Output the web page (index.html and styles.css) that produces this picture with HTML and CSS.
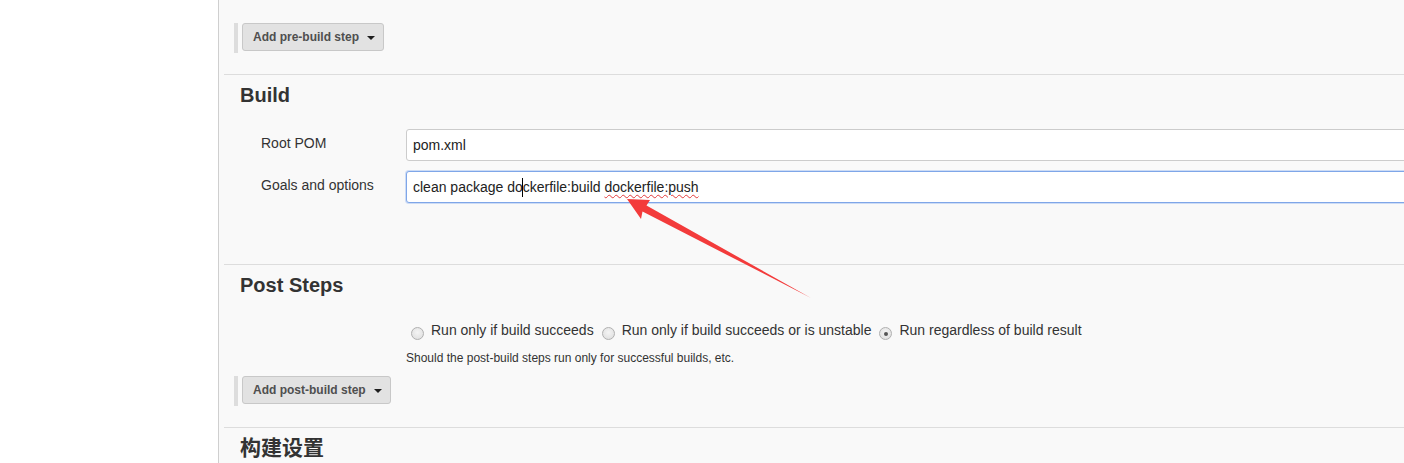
FILE: index.html
```html
<!DOCTYPE html>
<html lang="en">
<head>
<meta charset="utf-8">
<title>Build configuration</title>
<link rel="stylesheet" href="styles.css">
</head>
<body>
<div class="page">
  <aside class="side"></aside>
  <main class="main">
    <section class="sec sec-pre">
      <div class="step-row">
        <button class="dd-btn" type="button">Add pre-build step<span class="caret"></span></button>
      </div>
    </section>

    <section class="sec sec-build">
      <h2 class="sec-title">Build</h2>
      <div class="form">
        <div class="lbl">Root POM</div>
        <div class="field">pom.xml</div>
        <div class="lbl">Goals and options</div>
        <div class="field focused">clean package do<span class="cursor"></span>ckerfile:build <span class="misspell">dockerfile:push</span></div>
      </div>
    </section>

    <section class="sec sec-post">
      <h2 class="sec-title">Post Steps</h2>
      <div class="radio-row">
        <span class="opt"><span class="radio"></span>Run only if build succeeds</span>
        <span class="opt"><span class="radio"></span>Run only if build succeeds or is unstable</span>
        <span class="opt"><span class="radio checked"></span>Run regardless of build result</span>
      </div>
      <div class="help">Should the post-build steps run only for successful builds, etc.</div>
      <div class="step-row">
        <button class="dd-btn" type="button">Add post-build step<span class="caret"></span></button>
      </div>
    </section>

    <section class="sec sec-settings">
      <h2 class="sec-title cjk">构建设置</h2>
    </section>
  </main>
</div>
<svg class="annot" width="1404" height="463" viewBox="0 0 1404 463" xmlns="http://www.w3.org/2000/svg">
  <polygon points="627,199 650,200 646.5,205.5 811,298 642.5,211.5 641,219" fill="#f33b3b"/>
</svg>
</body>
</html>
```

FILE: styles.css
```css
html, body {
  margin: 0;
  padding: 0;
  height: 100%;
  overflow: hidden;
  background: #ffffff;
  font-family: "Liberation Sans", Arial, "Noto Sans CJK SC", sans-serif;
  color: #333333;
}

.page {
  display: flex;
  min-height: 463px;
  width: 1404px;
  overflow: hidden;
}

.side {
  width: 218px;
  flex: none;
  background: #ffffff;
}

.main {
  flex: 1;
  min-width: 0;
  background: #f9f9f9;
  border-left: 1px solid #cfcfcf;
  padding-left: 5px;
  overflow: hidden;
}

.sec {
  box-sizing: border-box;
}

.sec + .sec {
  border-top: 1px solid #dddddd;
}

.sec-pre {
  height: 74px;
  padding-top: 23px;
}

.sec-build {
  height: 190px;
}

.sec-post {
  height: 163px;
}

.sec-settings {
  height: 40px;
}

.sec-title {
  margin: 8px 0 0 16px;
  font-size: 20px;
  line-height: 24px;
  font-weight: bold;
  color: #333333;
}

.sec-title.cjk {
  font-size: 21px;
}

.step-row {
  display: flex;
  align-items: flex-start;
  height: 30px;
  margin-left: 10px;
  padding-left: 4px;
  border-left: 4px solid #dddddd;
}

.sec-post .step-row {
  margin-top: 10px;
}

.dd-btn {
  display: flex;
  align-items: center;
  height: 28px;
  box-sizing: border-box;
  padding: 0 8px 0 10px;
  border: 1px solid #c8c8c8;
  border-radius: 3px;
  background: #e2e2e2;
  font-family: "Liberation Sans", Arial, sans-serif;
  font-size: 12px;
  font-weight: bold;
  color: #4f4f4f;
  line-height: 26px;
}

.caret {
  display: inline-block;
  width: 0;
  height: 0;
  margin-left: 8px;
  margin-top: 1px;
  border-left: 4px solid transparent;
  border-right: 4px solid transparent;
  border-top: 4px solid #1e1e1e;
}

.form {
  display: grid;
  grid-template-columns: 145px 1fr;
  row-gap: 10px;
  margin-top: 22px;
  padding-left: 37px;
}

.lbl {
  padding-top: 4px;
  font-size: 14px;
  line-height: 20px;
  color: #333333;
}

.field {
  box-sizing: border-box;
  height: 32px;
  margin-right: -12px;
  padding: 5px 6px;
  border: 1px solid #cccccc;
  border-radius: 3px;
  background: #ffffff;
  font-size: 14px;
  line-height: 20px;
  color: #222222;
  white-space: nowrap;
}

.field.focused {
  border-color: #7fa6e8;
  box-shadow: 0 0 0 1px rgba(150, 185, 240, 0.45);
}

.cursor {
  display: inline-block;
  width: 1px;
  height: 19px;
  margin: 0 -0.5px;
  background: #000000;
  vertical-align: -5px;
}

.misspell {
  text-decoration: underline wavy #e23b3b;
  text-decoration-thickness: 1px;
  text-underline-offset: 2px;
}

.radio-row {
  display: flex;
  margin-top: 23px;
  padding-left: 182px;
  font-size: 14px;
  line-height: 20px;
  color: #333333;
}

.opt {
  display: flex;
  align-items: flex-start;
  margin-right: 3px;
  white-space: nowrap;
}

.radio {
  box-sizing: border-box;
  width: 13px;
  height: 13px;
  margin: 7px 7px 0 5px;
  border: 1px solid #b0b0b0;
  border-radius: 50%;
  background: radial-gradient(circle at 50% 40%, #f4f4f4 0%, #dcdcdc 100%);
  position: relative;
}

.radio.checked::after {
  content: "";
  position: absolute;
  left: 3.5px;
  top: 3.5px;
  width: 4px;
  height: 4px;
  border-radius: 50%;
  background: #555555;
}

.help {
  margin-top: 10px;
  padding-left: 182px;
  font-size: 12px;
  line-height: 16px;
  color: #333333;
}

.annot {
  position: absolute;
  left: 0;
  top: 0;
  pointer-events: none;
}
```
